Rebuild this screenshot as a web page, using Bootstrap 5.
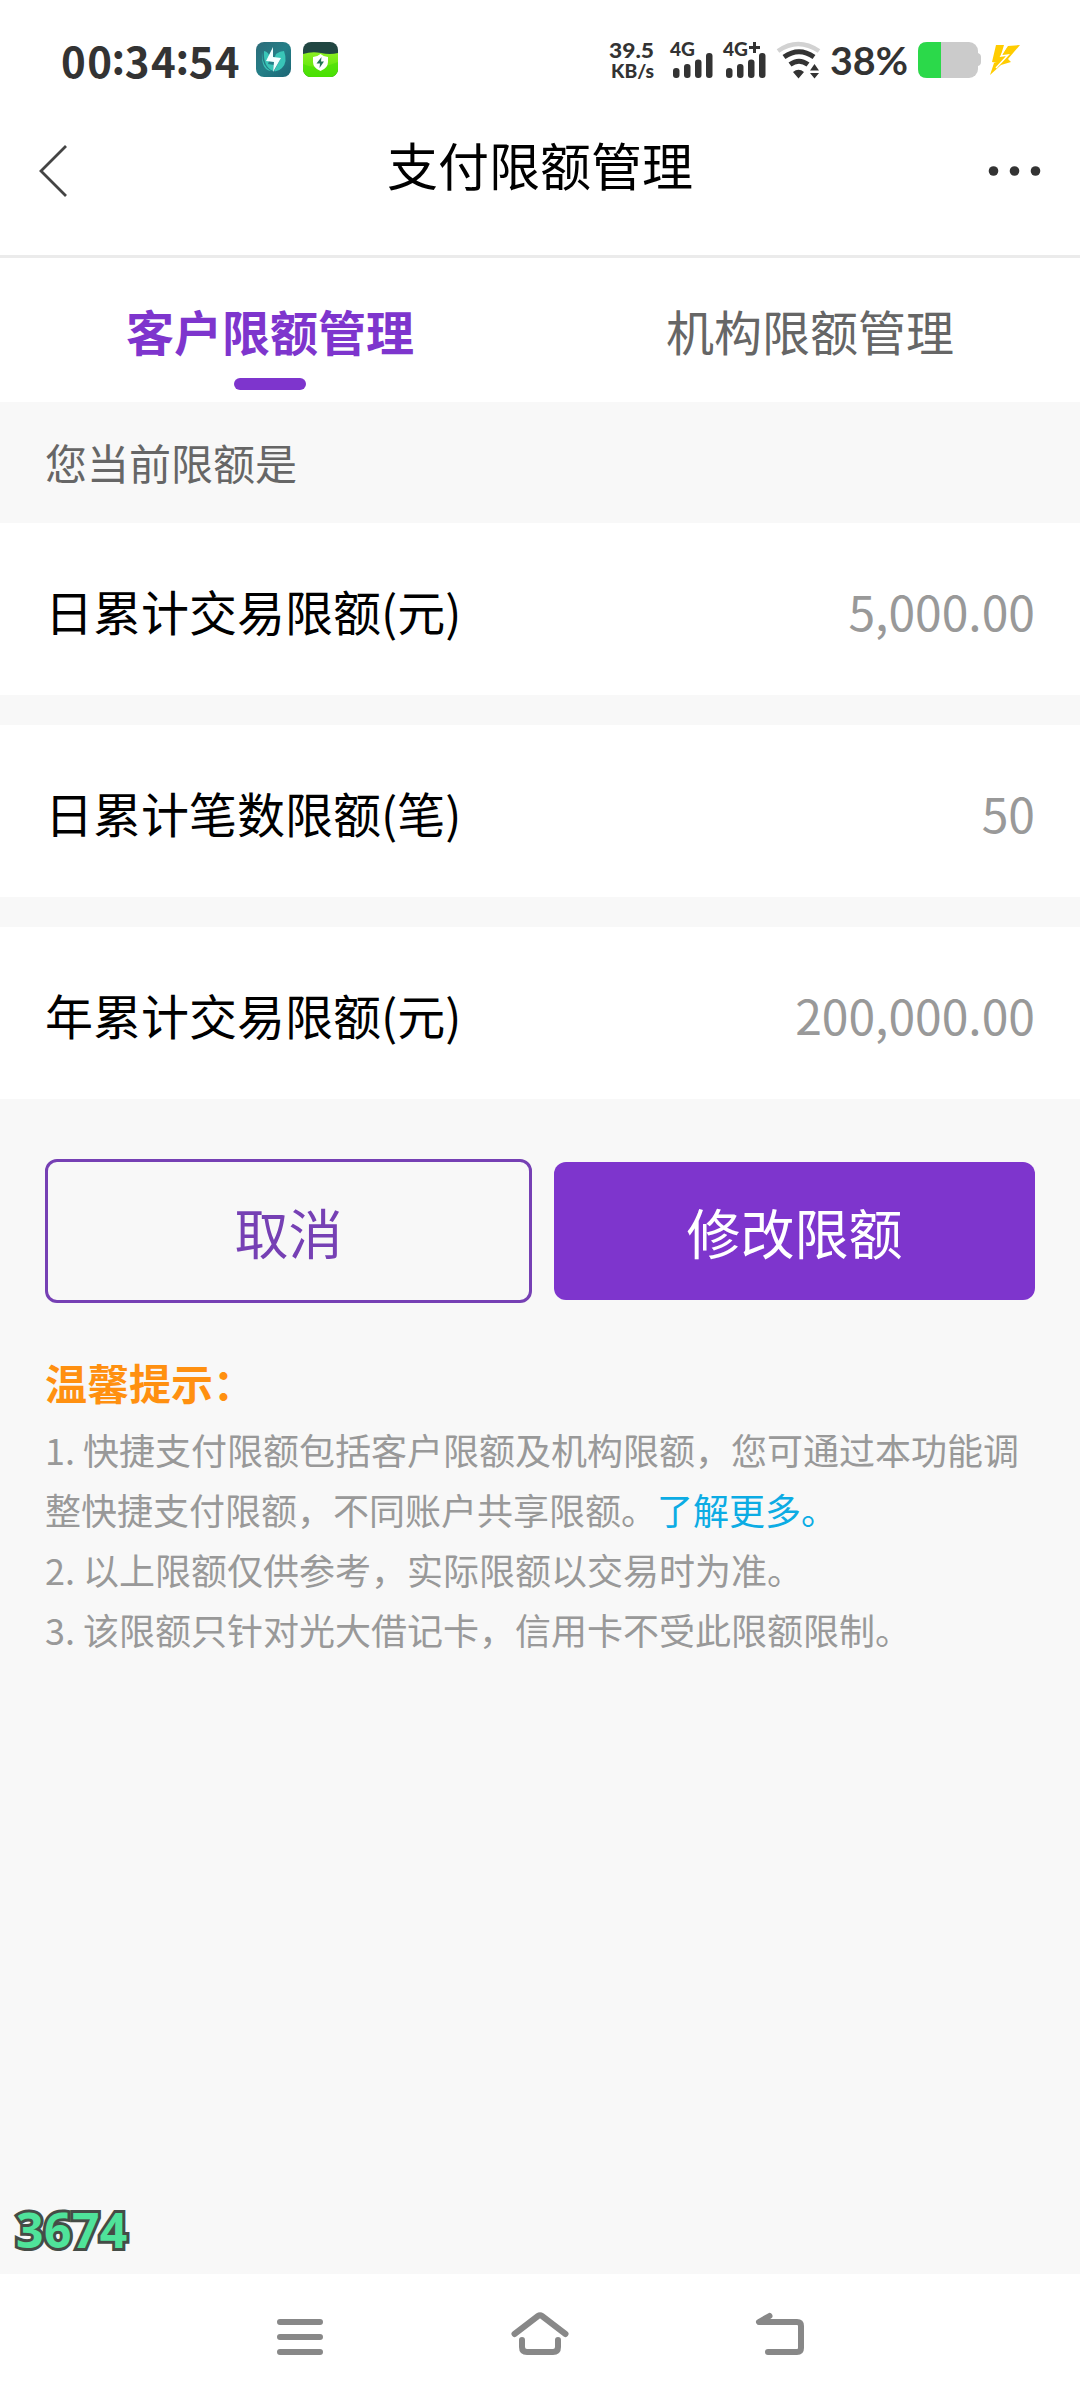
<!DOCTYPE html>
<html lang="zh-CN">
<head>
<meta charset="utf-8">
<meta name="viewport" content="width=device-width, initial-scale=1">
<title>支付限额管理</title>
<link href="https://cdn.jsdelivr.net/npm/bootstrap@5.3.0/dist/css/bootstrap.min.css" rel="stylesheet">
<style>
  body { font-family: "Noto Sans CJK SC", sans-serif; background: #f8f8f8; color: #000; }
  .app-screen { width: 1080px; height: 2400px; overflow: hidden; }
  .status-bar { height: 120px; color: #333; }
  .status-bar svg { display: block; flex: none; }
  .status-left { padding: 42px 0 0 61px; }
  .clock { font-size: 42px; line-height: 36px; font-weight: 700; letter-spacing: 1.4px; width: 195px; white-space: nowrap; }
  .clock i { font-style: normal; position: relative; top: -4px; margin: 0 -1.8px; }
  .gap-apps { margin-right: 12px; }
  .status-svg { font-family: Lato, sans-serif; font-weight: 900; fill: #333; margin-right: 50px; }
  .title-bar { height: 138px; padding: 0 36px; border-bottom: 3px solid #ebebeb; }
  .title-bar h1 { font-size: 51px; line-height: 60px; font-weight: 400; margin: 0; padding-top: 14px; }
  .title-bar svg { margin-top: 22px; display: block; }
  .tab-row { height: 144px; font-size: 48px; line-height: 60px; }
  .tab-row .nav-link { color: #666; padding: 42px 0 0; height: 144px; }
  .tab-row .nav-link.active { color: #7e35cd; font-weight: 700; }
  .tab-row .nav-link.active::after { content: ""; display: block; width: 72px; height: 12px; border-radius: 6px; background: #7e35cd; margin: 18px auto 0; }
  .section-label { height: 121px; padding: 0 45px 2px; font-size: 42px; color: #666; }
  .limit-list { gap: 30px; }
  .limit-row { height: 172px; padding: 1px 45px 0; font-size: 48px; line-height: 72px; }
  .limit-row .amount { color: #999; }
  .actions { padding: 60px 45px 0; gap: 22px; }
  .actions .btn { font-size: 54px; line-height: 72px; border-radius: 12px; padding: 2px 0 0; }
  .btn-cancel, .btn-cancel:hover { width: 487px; height: 144px; border: 3px solid #7640b4; color: #7640b4; }
  .btn-modify, .btn-modify:hover { width: 481px; height: 138px; border: 0; background: #7e35cd; color: #fff; }
  .tips { padding: 49px 45px 0; font-size: 36px; line-height: 60px; color: #999; }
  .tips h2 { font-size: 42px; line-height: 60px; font-weight: 700; color: #ff9010; margin: 0 0 7px; }
  .tips a { color: #0cace4; text-decoration: none; }
  .counter { position: absolute; left: 16px; bottom: 135px; font: 700 48px/70px "Open Sans", sans-serif; letter-spacing: .5px; color: #4fe39a; -webkit-text-stroke: 6px #454c47; paint-order: stroke fill; }
  .sys-nav { height: 126px; background: #fff; }
  .sys-nav svg { display: block; }
</style>
</head>
<body>
<div class="app-screen position-relative d-flex flex-column">
  <div class="status-bar bg-white d-flex justify-content-between align-items-start">
    <div class="status-left d-flex">
      <div class="clock">00<i>:</i>34<i>:</i>54</div>
      <svg class="gap-apps" width="35" height="36" viewBox="0 0 35 36">
        <defs><linearGradient id="teal" x1="0" y1="0" x2="1" y2="1"><stop offset="0" stop-color="#2d6b79"/><stop offset=".5" stop-color="#247f87"/><stop offset="1" stop-color="#1c6575"/></linearGradient></defs>
        <rect width="35" height="35" rx="8" fill="url(#teal)"/>
        <path d="M6 10Q6 25 15 29Q5 28 6 10M8 9Q13 10 14 16L12 22L18 23L17 29Q7 25 8 9M28 9Q32 20 26 26Q22 30 18 29L24 18L18 17L20 12Q24 9 28 9Z" fill="#39c5b7"/>
        <path d="M17 5L10 19L18 20L17 30L25 16L17 15Z" fill="#f2ffff"/>
      </svg>
      <svg width="35" height="36" viewBox="0 0 35 36">
        <defs><clipPath id="tile"><rect width="35" height="35" rx="8"/></clipPath><linearGradient id="lime" x1="0" y1="0" x2="0" y2="1"><stop offset="0" stop-color="#8cee22"/><stop offset="1" stop-color="#4de500"/></linearGradient></defs>
        <g clip-path="url(#tile)"><path d="M0 0H35V36H0Z" fill="#214642"/><path d="M0 12Q9 9 18 11T35 11V36H0Z" fill="url(#lime)"/><path d="M0 22Q8 26 17 25T35 20V36H0Z" fill="#43dd05" opacity=".55"/></g>
        <path d="M17.500 12Q21 15 25 15V20Q25 26 17.500 29Q10 26 10 20V15Q14 15 17.500 12Z" fill="#fff"/>
        <path d="M18.500 15L13.500 21.500H17L16.500 26L21 19.500H18Z" fill="#247456"/>
      </svg>
    </div>
    <svg class="status-svg" width="430" height="120" viewBox="600 0 430 120">
      <g font-size="21.500"><text x="609" y="57.500" textLength="45" lengthAdjust="spacingAndGlyphs">39.5</text><text x="611" y="78" font-size="18.500" textLength="43" lengthAdjust="spacingAndGlyphs">KB/s</text></g>
      <g font-size="18.500"><text x="670" y="56" textLength="25" lengthAdjust="spacingAndGlyphs">4G</text><text x="723" y="56" textLength="25" lengthAdjust="spacingAndGlyphs">4G</text></g>
      <path d="M749 47.500H760M754.500 42V53" stroke="#333" stroke-width="3"/>
      <g><rect x="673" y="68" width="6.500" height="10" rx="3"/><rect x="684" y="64" width="6.500" height="14" rx="3"/><rect x="695" y="59.500" width="6.500" height="18.500" rx="3"/><rect x="706" y="53" width="6.500" height="25" rx="3"/>
      <rect x="726" y="68" width="6.500" height="10" rx="3"/><rect x="737" y="64" width="6.500" height="14" rx="3"/><rect x="748" y="59.500" width="6.500" height="18.500" rx="3"/><rect x="759" y="53" width="6.500" height="25" rx="3"/></g>
      <g fill="none" stroke-width="4.500"><path d="M778 51Q798 37 819 51" stroke="#d2d2d2"/><path d="M784 57Q799 46.500 814 57M790 64.500Q799 58 808 64.500" stroke="#333" stroke-width="5"/></g>
      <path d="M793 72Q798.500 67.500 804 72L798.500 78.500ZM810 70.500L814.500 64L819 70.500ZM810 73H819L814.500 78.500Z"/>
      <text x="830" y="75" font-size="37.500" font-weight="700" textLength="78" lengthAdjust="spacingAndGlyphs">38%</text>
      <rect x="918" y="42" width="60" height="36" rx="9" fill="#cbcbcb"/><path d="M978 53Q981 54 981 57V62Q981 65 978 66Z" fill="#cbcbcb"/>
      <path d="M941 42H927Q918 42 918 51V69Q918 78 927 78H941Z" fill="#2bd94a"/>
      <g fill="#fc0"><path d="M996 45H1004L1001 55H1008L996 69L998 63L992 62Z"/><path d="M1008 46L1020 45L1008 59L1011 62L1001 65L990 75L994 63L1004 60L1001 56Z"/></g>
      <path d="M1007 45L1001 56L1008 55L996 68" fill="none" stroke="#fff" stroke-width="1.500"/>
    </svg>
  </div>
  <header class="title-bar bg-white d-flex justify-content-between align-items-start">
    <svg width="34" height="58" viewBox="36 142 34 58"><path d="M66 146L41 171L66 196" fill="none" stroke="#444" stroke-width="2.800"/></svg>
    <h1>支付限额管理</h1>
    <svg width="34" height="58" viewBox="1010 142 34 58" overflow="visible"><g fill="#333"><circle cx="993.500" cy="171" r="4.800"/><circle cx="1014.500" cy="171" r="4.800"/><circle cx="1035.500" cy="171" r="4.800"/></g></svg>
  </header>
  <nav class="nav nav-fill tab-row bg-white">
    <a class="nav-link nav-item w-50 active" href="#">客户限额管理</a>
    <a class="nav-link nav-item w-50" href="#">机构限额管理</a>
  </nav>
  <main class="flex-grow-1">
    <div class="section-label d-flex align-items-center">您当前限额是</div>
    <div class="limit-list d-flex flex-column">
      <div class="limit-row bg-white d-flex justify-content-between align-items-center"><span>日累计交易限额(元)</span><span class="amount">5,000.00</span></div>
      <div class="limit-row bg-white d-flex justify-content-between align-items-center"><span>日累计笔数限额(笔)</span><span class="amount">50</span></div>
      <div class="limit-row bg-white d-flex justify-content-between align-items-center"><span>年累计交易限额(元)</span><span class="amount">200,000.00</span></div>
    </div>
    <div class="actions d-flex align-items-center">
      <button class="btn btn-cancel" type="button">取消</button>
      <button class="btn btn-modify" type="button">修改限额</button>
    </div>
    <section class="tips">
      <h2>温馨提示：</h2>
      <div>1. 快捷支付限额包括客户限额及机构限额，您可通过本功能调整快捷支付限额，不同账户共享限额。<a href="#">了解更多。</a></div>
      <div>2. 以上限额仅供参考，实际限额以交易时为准。</div>
      <div>3. 该限额只针对光大借记卡，信用卡不受此限额限制。</div>
    </section>
  </main>
  <div class="counter">3674</div>
  <footer class="sys-nav d-flex justify-content-center">
    <svg width="540" height="126" viewBox="270 2274 540 126" fill="none" stroke="#888" stroke-width="6" stroke-linecap="round" stroke-linejoin="round">
      <path d="M280 2322H320M280 2337H320M280 2352H320"/>
      <path d="M514.500 2334L538 2316Q540 2314.500 542 2316L565.500 2334M522 2340V2347Q522 2352 527 2352H553Q558 2352 558 2347V2340"/>
      <path d="M769.500 2316L759 2322H797Q801 2322 801 2326V2348Q801 2352 797 2352H768"/>
    </svg>
  </footer>
</div>
<script src="https://cdn.jsdelivr.net/npm/bootstrap@5.3.0/dist/js/bootstrap.bundle.min.js"></script>
</body>
</html>
